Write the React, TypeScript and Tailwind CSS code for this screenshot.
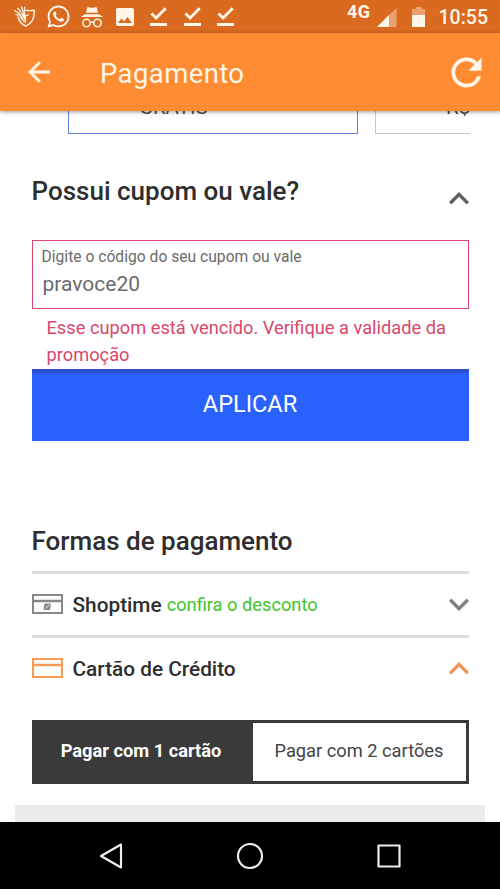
import type { ReactNode } from 'react';
import { FaWhatsapp } from 'react-icons/fa';
import { MdPhoto, MdRefresh } from 'react-icons/md';

function ShieldIcon() {
  return (
    <svg viewBox="0 0 22 23" className="h-[23px] w-[22px]" fill="none" stroke="#fff6e8">
      <path d="M11.500 5.200c3 .7 5.500.5 8.700 0 .6 7.500-1.600 12.800-8.400 16-4.500-2.300-7-5.600-7.900-9.700" strokeWidth="1.400" />
      <path d="M5 9.500 10.500 7c1.500 2.500 2 5.500 1.300 11C8.500 16.500 6 13.500 5 9.500Z" fill="#fff6e8" stroke="none" />
      <path d="m.3 5.300 5.500 3.500M3.500 3l4 4.500M7.500 1.300l1.500 5.500M10.700 1.800l-.5 6M1.500 9.300l4 1" strokeWidth="1.300" />
      <path d="m12 11 2.800-1.500" strokeWidth="1.200" />
      <path d="m7 9 3.500 7" stroke="#d96a1f" strokeWidth=".7" />
    </svg>
  );
}

function IncognitoIcon() {
  return (
    <svg viewBox="0 0 22 21" className="h-[21px] w-[22px]" fill="#fff6e8">
      <path d="M6.200.8c.3-.7.9-.9 1.600-.6 2.100.8 4.300.8 6.400 0 .7-.3 1.300-.1 1.600.6L17 5.800H5Z" />
      <path d="M3.800 7.300h14.400L22 10H0Z" />
      <g fill="none" stroke="#fff6e8" strokeWidth="1.500">
        <circle cx="5.500" cy="16" r="3.700" />
        <circle cx="16.500" cy="16" r="3.700" />
        <path d="M9.200 15.600c1.200-.7 2.400-.7 3.600 0" />
      </g>
    </svg>
  );
}

function DoneIcon() {
  return (
    <svg viewBox="0 0 17 20" className="h-5 w-[17px]" fill="none" stroke="#fff6e8">
      <path d="m1.500 6.500 4.600 4.600L15.700 1.300" strokeWidth="2.800" />
      <path d="M0 17.500h17" strokeWidth="3" />
    </svg>
  );
}

function BackIcon() {
  return (
    <svg viewBox="0 0 22 22" className="ml-[28px] size-[22px]" fill="none" stroke="currentColor" strokeWidth="2.800">
      <path d="M22 11H2M11.800 1.200 2 11l9.800 9.800" />
    </svg>
  );
}

function Chevron({ className }: { className: string }) {
  return (
    <svg viewBox="0 0 20 13" className={`h-[13px] w-5 shrink-0 ${className}`} fill="none" stroke="currentColor">
      <path d="M1.200 11.200 10 2.400l8.800 8.800" strokeWidth="3.400" />
    </svg>
  );
}

function CardIcon({ store = false, className }: { store?: boolean; className: string }) {
  return (
    <svg viewBox="0 0 31 20" className={`h-5 w-[31px] shrink-0 ${className}`} fill="none" stroke="currentColor">
      <path d="M1 1h29v18H1Z" strokeWidth="2" />
      <path d="M1 7h29" strokeWidth="2.500" />
      {store && (
        <>
          <path d="M12.500 9.500h6.500l-1 6.500h-6.500Z" fill="currentColor" stroke="none" />
          <path d="m13.500 14.500 4-4" stroke="#fff" strokeWidth=".9" />
        </>
      )}
    </svg>
  );
}

function StatusBar() {
  return (
    <div className="flex h-[33px] items-start bg-[#d96a1f] text-[#fff6e8]">
      <div className="ml-[14px] mt-[5px]"><ShieldIcon /></div>
      <FaWhatsapp className="ml-[10px] mt-[4px] size-[25px]" />
      <div className="ml-[10px] mt-[7px]"><IncognitoIcon /></div>
      <MdPhoto className="ml-[10px] mt-[5px] size-6" />
      <div className="ml-[13px] mt-[7px] flex gap-[16.500px]">
        <DoneIcon />
        <DoneIcon />
        <DoneIcon />
      </div>
      <div className="ml-auto flex pr-[12px]">
        <span className="mt-[2px] text-[18px] font-bold leading-5 tracking-[0.500px]">4G</span>
        <svg viewBox="0 0 20 20" className="ml-[6px] mt-[7px] size-5" fill="currentColor">
          <path d="M0 20 19.500 1v19Z" opacity=".4" />
          <path d="M0 20 12 8v12Z" />
        </svg>
        <svg viewBox="0 0 13 20" className="ml-[15px] mt-[7px] h-5 w-[13px]" fill="currentColor">
          <path d="M0 2h3.500V0h6v2H13v6H0Z" opacity=".4" />
          <path d="M0 8h13v12H0Z" />
        </svg>
        <span className="ml-[14px] mt-[6px] text-[19.500px] font-medium leading-[23px]">10:55</span>
      </div>
    </div>
  );
}

function AppBar() {
  return (
    <header className="relative z-10 flex h-[78px] items-center bg-[#ff8c32] text-[#fff6e8] shadow-[0_1px_4px_rgba(0,0,0,0.4)]">
      <BackIcon />
      <h1 className="ml-[50px] pt-[3px] text-[27.500px] leading-8 tracking-[0.400px]">Pagamento</h1>
      <MdRefresh className="ml-auto mr-[11px] size-[45px]" />
    </header>
  );
}

function PaymentRow({ icon, children, chevron }: { icon: ReactNode; children: ReactNode; chevron: ReactNode }) {
  return (
    <div className="flex h-[64px] items-center border-t-[3px] border-[#dcdcdc] pb-px">
      {icon}
      <div className="ml-[10px] flex items-center gap-[5px] pt-px text-[20.800px] font-medium leading-6">{children}</div>
      <div className="ml-auto pt-px">{chevron}</div>
    </div>
  );
}

export default function App() {
  return (
    <div className="flex h-[889px] w-[500px] flex-col overflow-hidden bg-white font-['Roboto',sans-serif] text-[#2e2e2e]">
      <StatusBar />
      <AppBar />
      <main className="flex min-h-0 flex-1 flex-col overflow-hidden">
        {/* shipping options, scrolled under the app bar */}
        <div className="ml-[68px] mr-[30px] flex h-[23px] shrink-0 items-end gap-[17px] overflow-hidden text-[20.500px] leading-6 text-[#505050]">
          <div className="flex h-[60px] w-[290px] shrink-0 items-end border border-[#5f80e0] pb-[14px] pl-[70px]">GRÁTIS</div>
          <div className="flex h-[60px] w-[290px] shrink-0 items-end border border-[#c8c8c8] pb-[14px] pl-[70px]">R$</div>
        </div>

        <section className="px-[31.500px]">
          <div className="flex h-[106px] items-start justify-between pt-[41px]">
            <h2 className="text-[26px] font-medium leading-8">Possui cupom ou vale?</h2>
            <Chevron className="mt-[17px] text-[#606060]" />
          </div>
          <div className="h-[69px] border border-[#d9476a] px-[9px] pt-[6px] text-[#6b6b6b]">
            <label className="block text-[15.650px] leading-5">Digite o código do seu cupom ou vale</label>
            <div className="mt-[3px] pl-px text-[21px] leading-7">pravoce20</div>
          </div>
          <p className="h-[60px] pl-[15px] pr-4 pt-[6px] text-[18.250px] leading-[26.500px] text-[#d9476a]">
            Esse cupom está vencido. Verifique a validade da promoção
          </p>
          <button className="flex h-[72px] w-full items-center justify-center border-t-4 border-[#2c50cf] bg-[#2962ff] pb-[4px] text-[23.500px] text-white">
            APLICAR
          </button>
        </section>

        <section className="px-[31.500px] pt-[84px]">
          <h2 className="h-[46px] text-[26px] font-medium leading-8">Formas de pagamento</h2>
          <PaymentRow
            icon={<CardIcon store className="text-[#888888]" />}
            chevron={<Chevron className="rotate-180 text-[#808080]" />}
          >
            Shoptime <span className="text-[18.250px] font-normal text-[#3fc62b]">confira o desconto</span>
          </PaymentRow>
          <PaymentRow
            icon={<CardIcon className="text-[#fb9a52]" />}
            chevron={<Chevron className="text-[#f0955a]" />}
          >
            Cartão de Crédito
          </PaymentRow>
          <div className="mt-[21px] flex h-[64px] border-[3px] border-[#3a3a3a] text-[18.250px] leading-6">
            <div className="flex w-[218px] items-center justify-center bg-[#3a3a3a] pb-[3px] pr-[5px] font-bold text-white">Pagar com 1 cartão</div>
            <div className="flex flex-1 items-center justify-center pb-[3px] text-[#444444]">Pagar com 2 cartões</div>
          </div>
        </section>
        <div className="mx-[15px] mt-[21px] h-[17px] bg-[#ececec]" />
      </main>

      <nav className="flex h-[67px] shrink-0 items-center bg-black text-[#ececec]">
        <svg viewBox="0 0 24 28" className="ml-[99px] h-7 w-6" fill="none" stroke="currentColor" strokeWidth="2.200" strokeLinejoin="round">
          <path d="M22 2.500v23L2 14Z" />
        </svg>
        <svg viewBox="0 0 28 28" className="ml-[113px] size-7" fill="none" stroke="currentColor" strokeWidth="2.200">
          <circle cx="14" cy="14" r="12" />
        </svg>
        <svg viewBox="0 0 24 24" className="ml-[113px] size-6" fill="none" stroke="currentColor" strokeWidth="2.200" strokeLinejoin="round">
          <path d="M1.500 1.500h21v21h-21Z" />
        </svg>
      </nav>
    </div>
  );
}
